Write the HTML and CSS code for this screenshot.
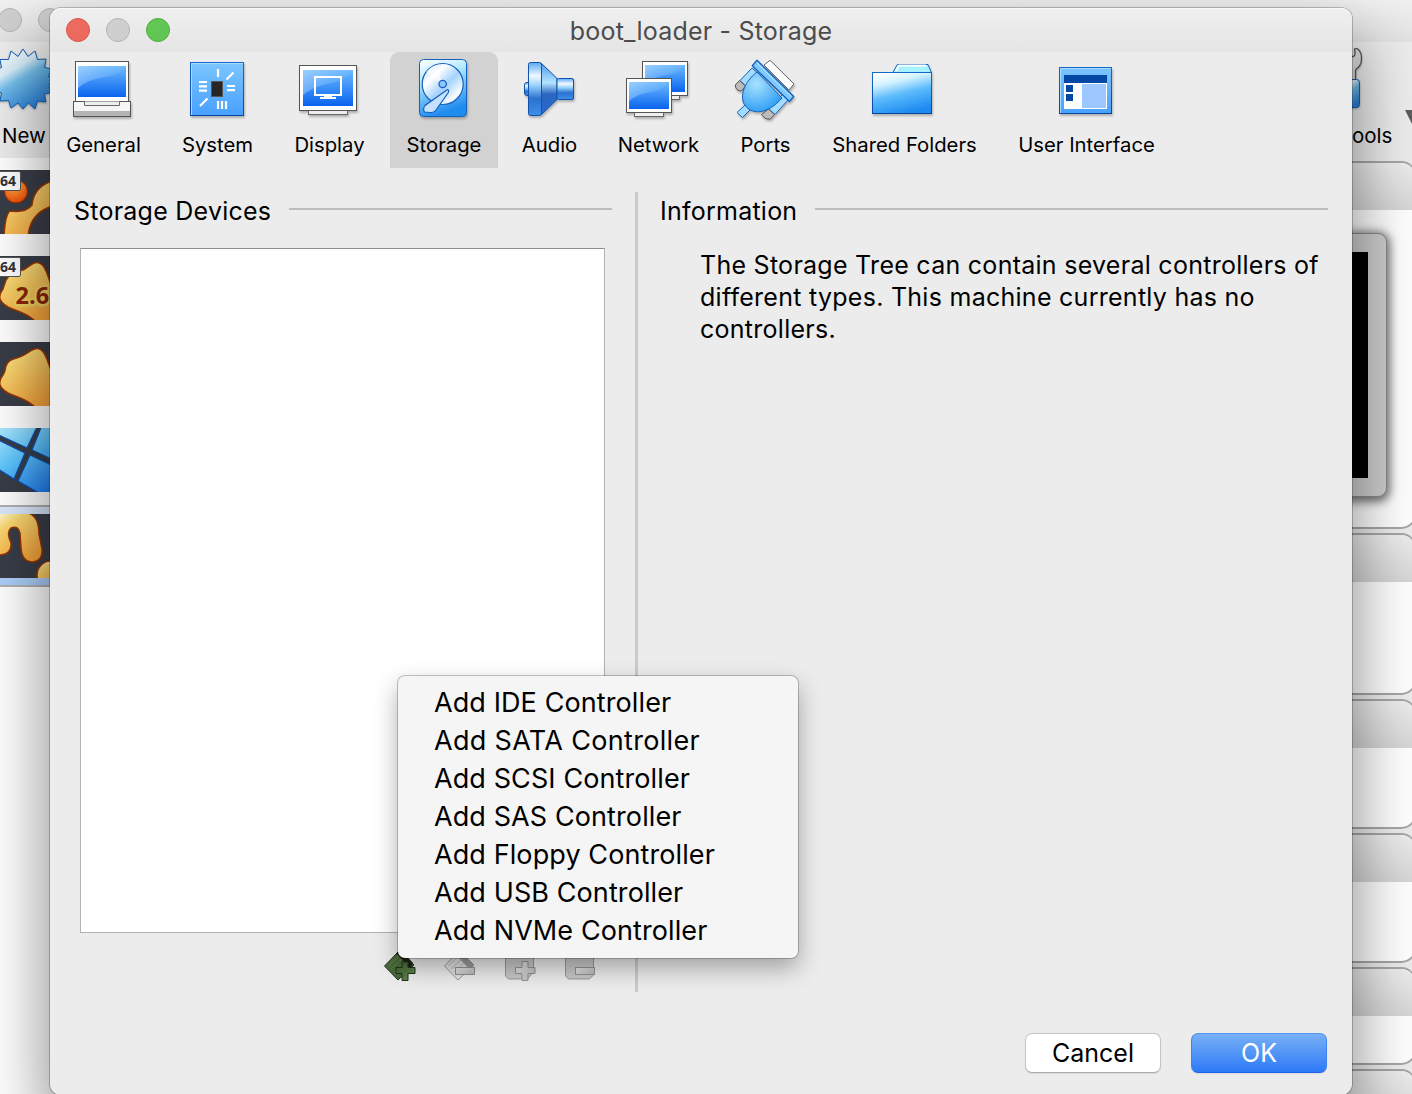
FILE: index.html
```html
<!DOCTYPE html>
<html lang="en">
<head>
<meta charset="utf-8">
<title>boot_loader - Storage</title>
<link rel="stylesheet" href="styles.css">
</head>
<body>
<svg class="defs" width="0" height="0" aria-hidden="true">
  <defs>
    <linearGradient id="screen" x1="0" y1="0" x2="0" y2="1"><stop offset="0" stop-color="#6cbaff"/><stop offset="1" stop-color="#0a63ee"/></linearGradient>
    <linearGradient id="gloss" x1="0" y1="0" x2="1" y2=".3"><stop offset="0" stop-color="#c4e2ff"/><stop offset="1" stop-color="#7cc0fe" stop-opacity=".4"/></linearGradient>
    <linearGradient id="tile" x1="0" y1="0" x2="0" y2="1"><stop offset="0" stop-color="#7cc6ff"/><stop offset="1" stop-color="#48a0ff"/></linearGradient>
    <linearGradient id="edge" x1="0" y1="0" x2="0" y2="1"><stop offset="0" stop-color="#1468cc"/><stop offset="1" stop-color="#0b46a0"/></linearGradient>
    <linearGradient id="drive" x1="0" y1="0" x2=".3" y2="1"><stop offset="0" stop-color="#fff"/><stop offset=".35" stop-color="#b9ecff"/><stop offset="1" stop-color="#1f8cf0"/></linearGradient>
    <linearGradient id="disc" x1="0" y1="0" x2="1" y2="1"><stop offset="0" stop-color="#a4d4ff"/><stop offset=".3" stop-color="#fff"/><stop offset=".55" stop-color="#a4d2fd"/><stop offset=".8" stop-color="#f8fcff"/><stop offset="1" stop-color="#a4d4ff"/></linearGradient>
    <linearGradient id="metal" x1="0" y1="0" x2="0" y2="1"><stop offset="0" stop-color="#5aa8f4"/><stop offset=".25" stop-color="#f0f9ff"/><stop offset=".42" stop-color="#a0d6fc"/><stop offset=".68" stop-color="#2a72d0"/><stop offset="1" stop-color="#3f8fe8"/></linearGradient>
    <linearGradient id="cone" x1="0" y1="0" x2="0" y2="1"><stop offset="0" stop-color="#4f9cec"/><stop offset=".38" stop-color="#b4e4ff"/><stop offset=".6" stop-color="#2c66c2"/><stop offset="1" stop-color="#2868cc"/></linearGradient>
    <radialGradient id="plug" cx=".35" cy=".3" r=".75"><stop offset="0" stop-color="#a8e2ff"/><stop offset="1" stop-color="#2b9df4"/></radialGradient>
    <linearGradient id="folder" x1=".2" y1="0" x2=".55" y2="1"><stop offset="0" stop-color="#fff"/><stop offset=".25" stop-color="#d4f2ff"/><stop offset=".55" stop-color="#5cbcfc"/><stop offset="1" stop-color="#1c8af0"/></linearGradient>
    <linearGradient id="star" x1="0" y1="0" x2=".6" y2="1"><stop offset="0" stop-color="#fff"/><stop offset=".38" stop-color="#d8eef8"/><stop offset=".55" stop-color="#74c0ec"/><stop offset="1" stop-color="#2a80d8"/></linearGradient>
    <linearGradient id="gold" x1="0" y1="0" x2=".6" y2="1"><stop offset="0" stop-color="#fffce0"/><stop offset=".3" stop-color="#fad872"/><stop offset="1" stop-color="#f4a43c"/></linearGradient>
    <radialGradient id="orange" cx=".4" cy=".25" r=".8"><stop offset="0" stop-color="#ffb048"/><stop offset="1" stop-color="#f04800"/></radialGradient>
    <linearGradient id="pane" x1="0" y1="0" x2=".6" y2="1"><stop offset="0" stop-color="#c4f4fc"/><stop offset=".5" stop-color="#5cc4ff"/><stop offset="1" stop-color="#1c78f0"/></linearGradient>
    <linearGradient id="silver" x1="0" y1="0" x2="1" y2="1"><stop offset="0" stop-color="#ededed"/><stop offset="1" stop-color="#b4b4b4"/></linearGradient>
    <linearGradient id="green" x1="0" y1="0" x2="1" y2="1"><stop offset="0" stop-color="#3c5c2e"/><stop offset="1" stop-color="#688c54"/></linearGradient>
  </defs>
</svg>

<div class="manager">
  <div class="manager-titlebar"><i class="light"></i><i class="light"></i></div>
  <div class="manager-toolbar">
    <div class="tool-new">
      <svg width="56" height="68" viewBox="0 46 56 68"><path d="M23 49L28 56.500L35 51L37.500 59.500L46 59L44.500 67.500L53 69L48 76L56 80L48 85.500L53 92L44.500 94L46 102L37.500 101L35 109L28.500 103L23 109L18 103L11 108L8.500 100.500L0 101L1.500 93L-5 90L-1 85L-5 80L-1 76L-5 70L1.500 67.500L0 59.500L8.500 59.500L11 51L18 56.500Z" fill="url(#star)" stroke="#1460b4"/></svg>
      <span>New</span>
    </div>
    <div class="tool-tools">
      <svg width="62" height="68" viewBox="1350 46 62 68"><path d="M1350 56.500h3.500q2-1 1.500-5l-.5-2.500q4-2 6.500 5q1.500 8-1.500 12l-4 4v10h-7v-20z" fill="#ddd" stroke="#555" stroke-width="1.300"/><rect x="1340" y="79.500" width="19.500" height="28" rx="3" fill="url(#star)" stroke="#1460b4"/></svg>
      <span>ools</span>
    </div>
    <i class="drop-arrow"></i>
  </div>
  <div class="manager-body">
    <div class="vm-list">
      <div class="vm"><svg viewBox="0 170 50 64"><path d="M4 237Q5 215 10 211Q26 213 32 205Q34 185 56 180V205Q28 212 28 240Z" fill="url(#gold)" stroke="#9a3400" stroke-width="1.500"/><circle cx="16" cy="191.500" r="11.500" fill="url(#orange)" stroke="#8c2800"/></svg><b>64</b></div>
      <div class="vm"><svg viewBox="0 256 50 64"><path d="M6 280C12 270 20 272 25 269C33 263 38 259 44 267C48 273 49 282 54 290V322H36C26 312 18 312 8 307C-2 301 -2 296 3 289Z" fill="url(#gold)" stroke="#9a3400" stroke-width="1.500"/><text x="15.500" y="304" class="kernel">2.6</text></svg><b>64</b></div>
      <div class="vm"><svg viewBox="0 342 50 64"><path d="M6 366C8 358 18 359 24 355C33 349 38 345 44 353C48 359 49 368 54 376V408H36C26 398 18 398 8 393C-2 387 -2 382 3 375C6 371 5 369 6 366Z" fill="url(#gold)" stroke="#9a3400" stroke-width="1.500"/></svg></div>
      <div class="vm"><svg viewBox="0 428 50 64"><path d="M-12 425H38L27 448L-12 430ZM42 425H60V463L32 450ZM-10 436L25 453L14 479L-10 464ZM30 455L60 469V505L18 481Z" fill="url(#pane)" stroke="#0b4fae" stroke-width="1.200"/></svg></div>
      <div class="vm selected"><svg viewBox="0 514 50 64"><path d="M-5 513H28Q39 516 39 534L42 549Q43 561 33 562Q22 562 21 548L20 533Q18 525 11 528Q6 532 11 543Q12 554 0 555L-5 555Z" fill="url(#gold)" stroke="#9a3400" stroke-width="1.500"/><circle cx="51" cy="575" r="14" fill="url(#gold)" stroke="#9a3400" stroke-width="1.500"/></svg></div>
    </div>
    <div class="details">
      <section class="card card-preview"><header></header><div class="preview"><div></div></div></section>
      <section class="card card-tall"><header></header></section>
      <section class="card card-short"><header></header></section>
      <section class="card card-short"><header></header></section>
      <section class="card card-small"><header></header></section>
      <section class="card card-small"><header></header></section>
    </div>
  </div>
</div>

<main class="dialog">
  <div class="titlebar">
    <div class="lights"><i class="light red"></i><i class="light"></i><i class="light green"></i></div>
    <h1>boot_loader - Storage</h1>
  </div>

  <nav class="tabs">
    <a class="tab">
      <svg width="65" height="65" viewBox="71 57 65 65"><rect x="75.500" y="61.500" width="53" height="40" fill="#fff" stroke="#555"/><path d="M78 66h48v31H78z" fill="url(#screen)"/><path d="M78 66h46q-3 9-18 11q-18 2-28 11z" fill="url(#gloss)" opacity=".55"/><rect x="73.500" y="101.500" width="57" height="15" fill="#f6f6f6" stroke="#555"/><path d="M74 111h56v5H74z" fill="#b4b4b4"/><path d="M84.500 101.500v4h35v-4" fill="#eee" stroke="#666"/></svg>
      <span>General</span></a>
    <a class="tab">
      <svg width="65" height="65" viewBox="185 57 65 65"><rect x="190.500" y="62.500" width="53" height="53" fill="url(#tile)" stroke="url(#edge)"/><path d="M191.500 115V63.500H243" fill="none" stroke="#a8dcff"/><rect x="211.500" y="81.500" width="11" height="15" fill="#262626" stroke="#555"/><path d="M218 69v8M226.500 79.500l7-7M199 82h8M199 86.300h8M199 90.600h8M227 86h8M227 90.200h8M218 101v8M222 101v8M226 101v8M200 106l7.500-7.500" stroke="#fff" stroke-width="2.200"/></svg>
      <span>System</span></a>
    <a class="tab">
      <svg width="65" height="65" viewBox="297 57 65 65"><rect x="308.500" y="108.500" width="39" height="6" fill="#eee" stroke="#666"/><rect x="299.500" y="65.500" width="57" height="45" fill="#fff" stroke="#555"/><path d="M303 70h50v36h-50z" fill="url(#screen)"/><path d="M303 70h48q-4 10-20 13q-17 3-28 12z" fill="url(#gloss)" opacity=".55"/><rect x="315" y="77" width="26" height="18" fill="none" stroke="#fff" stroke-width="2"/><path d="M324 96h8v1h4v2h-16v-2h4z" fill="#fff"/></svg>
      <span>Display</span></a>
    <a class="tab active">
      <svg width="66" height="65" viewBox="411 57 66 65"><rect x="419.500" y="59.500" width="47" height="57" rx="4" fill="url(#drive)" stroke="#1560ba"/><circle cx="442.700" cy="84" r="20.500" fill="url(#disc)" stroke="#1560ba" stroke-width="1.200"/><path d="M442.700 84L426 72A20 20 0 0 1 436 65Z" fill="#fff" opacity=".6"/><circle cx="442.700" cy="84" r="3.700" fill="#8cc8fb" stroke="#1560ba" stroke-width="1.300"/><path d="M447.500 89.500Q449.500 90 448 93L436 110Q434 113 430 112.500L424.500 112Q422.500 109 425 105.500Z" fill="#c4e2ff" stroke="#1560ba" stroke-width="1.200"/></svg>
      <span>Storage</span></a>
    <a class="tab">
      <svg width="65" height="65" viewBox="517 57 65 65"><rect x="524.500" y="82.500" width="6" height="13" rx="2.500" fill="url(#metal)" stroke="#1252a8"/><path d="M541.500 63.500L557 78.500V99.500L541.500 114.500Z" fill="url(#cone)" stroke="#1252a8"/><rect x="528.500" y="62.500" width="13" height="53" rx="2" fill="url(#metal)" stroke="#1252a8"/><rect x="557" y="78.500" width="16.500" height="21" rx="1.500" fill="url(#metal)" stroke="#1252a8"/></svg>
      <span>Audio</span></a>
    <a class="tab">
      <svg width="65" height="65" viewBox="626 57 65 65"><path d="M660 95.500h19.500v4H660z" fill="#eee" stroke="#666"/><rect x="642.500" y="61.500" width="45" height="34" fill="#fff" stroke="#555"/><path d="M645 65h40v27h-40z" fill="url(#screen)"/><path d="M645 65h38q-3 8-16 10q-14 2-22 9z" fill="url(#gloss)" opacity=".55"/><rect x="634.500" y="110.500" width="29" height="6" fill="#eee" stroke="#666"/><rect x="626.500" y="78.500" width="45" height="34" fill="#fff" stroke="#555"/><path d="M629 82h40v27h-40z" fill="url(#screen)"/><path d="M629 82h38q-3 8-16 10q-14 2-22 9z" fill="url(#gloss)" opacity=".55"/></svg>
      <span>Network</span></a>
    <a class="tab">
      <svg width="65" height="65" viewBox="733 57 65 65"><g stroke-linejoin="round"><path d="M764 65L770 60.300L794 84L789 90Z" fill="#fff" stroke="#666"/><g fill="#a4dcff" stroke="#1560ba"><path d="M752 68L758 73.500L746.500 87L740 80.500Z"/><path d="M783 94L788.500 99.500L775 114.500L768.500 108.500Z"/><path d="M745 105L750 110L742.500 117.500L737 112.500Z"/></g><path d="M739.500 80.500L745.500 86L741.500 91Q735.500 91 735.300 85ZM768.500 109L774.500 114.500L770.500 119Q765 120 761.500 114.500Z" fill="#bbb" stroke="#555"/><path d="M757 72C744 82 739 97 745 105.500C753 115.500 768 114 782 98Z" fill="url(#plug)" stroke="#1560ba"/><path d="M757 60.300L793.700 96.500L789.500 101.500L752.300 65.700Z" fill="#7ccaff" stroke="#1560ba" stroke-width="1.300"/><path d="M756.500 62.500L791 96.500" stroke="#bce8ff"/></g></svg>
      <span>Ports</span></a>
    <a class="tab">
      <svg width="65" height="65" viewBox="872 57 65 65"><path d="M892.500 73L897.300 64.500H928L931.500 73Z" fill="#a8f2ff" stroke="#1560ba"/><path d="M896 71l3-5.500h27" stroke="#fff" stroke-width="2" fill="none"/><rect x="872.500" y="72.500" width="59" height="41" fill="url(#folder)" stroke="url(#edge)"/></svg>
      <span>Shared Folders</span></a>
    <a class="tab">
      <svg width="65" height="65" viewBox="1054 57 65 65"><rect x="1059.500" y="67.500" width="52" height="46" fill="url(#tile)" stroke="url(#edge)"/><path d="M1060.500 113V68.500H1111" fill="none" stroke="#a8dcff"/><path d="M1064 75h43v34h-43z" fill="#fff"/><path d="M1064 75h43v8h-43zM1066 85h7v7h-7zM1066 94h7v7h-7z" fill="#0448a6"/><path d="M1082 84h24v24h-24z" fill="#9cc8ff"/></svg>
      <span>User Interface</span></a>
  </nav>

  <div class="content">
    <section class="devices">
      <h2>Storage Devices</h2>
      <div class="device-tree"></div>
      <div class="device-actions">
        <svg width="34" height="34" viewBox="384 950 34 34"><path d="M384.500 966L399 951L414 965L398 980Z" fill="#48683a" stroke="#24331c"/><path d="M396 953L403 952L413 963L410 969Z" fill="#1c2018"/><path d="M388 966l11-10M391 969l11-10M394 972l10-9" stroke="#5c8048"/><path d="M402 962h6v5.500h7v6h-7v7h-6v-7h-6v-6h6z" fill="url(#green)" stroke="#1f321a"/></svg>
        <svg width="34" height="34" viewBox="444 950 34 34"><path d="M444.500 966L459 951L474 965L458 980Z" fill="#e2e2e2" stroke="#999"/><path d="M462 952L474 965L470 970L456 955Z" fill="#999"/><path d="M448 966l11-10M451 969l11-10M454 972l10-9" stroke="#bbb"/><rect x="455.500" y="967.500" width="19" height="7" fill="url(#silver)" stroke="#929292"/></svg>
        <svg width="34" height="34" viewBox="504 950 34 34"><path d="M505.500 950h28v22l-6 7h-19l-3-3z" fill="#c8c8c8" stroke="#999"/><path d="M522 961.500h6v6h7v6h-7v7h-6v-7h-6.500v-6h6.500z" fill="url(#silver)" stroke="#929292"/></svg>
        <svg width="34" height="34" viewBox="564 950 34 34"><path d="M565.500 950h28v25l-4 4h-21l-3-3z" fill="#c8c8c8" stroke="#999"/><rect x="575.500" y="967.500" width="19" height="7" fill="url(#silver)" stroke="#929292"/></svg>
      </div>
    </section>
    <div class="splitter"></div>
    <section class="info">
      <h2>Information</h2>
      <p>The Storage Tree can contain several controllers of<br>different types. This machine currently has no<br>controllers.</p>
    </section>
  </div>

  <footer><button class="cancel">Cancel</button><button class="ok">OK</button></footer>

  <ul class="menu">
    <li>Add IDE Controller</li>
    <li class="sata">Add SATA Controller</li>
    <li>Add SCSI Controller</li>
    <li>Add SAS Controller</li>
    <li>Add Floppy Controller</li>
    <li>Add USB Controller</li>
    <li>Add NVMe Controller</li>
  </ul>
</main>
</body>
</html>
```
FILE: styles.css
```css
* { box-sizing: border-box; }
body {
  margin: 0;
  width: 1412px;
  height: 1094px;
  position: relative;
  overflow: hidden;
  background: #ececec;
  color: #000;
  font-family: Inter, "Liberation Sans", sans-serif;
  font-weight: 430;
}
.defs { position: absolute; }
h1, h2, p, ul { margin: 0; padding: 0; font-weight: 430; }

.light {
  display: block;
  width: 24px;
  height: 24px;
  border-radius: 50%;
  background: #cfcfcf;
  border: 1px solid #b4b4b4;
}
.light.red { background: #ed6a5e; border-color: #d9564b; }
.light.green { background: #61c654; border-color: #4fae40; }

/* Window behind the dialog */
.manager { height: 1094px; display: flex; flex-direction: column; overflow: hidden; }
.manager-titlebar {
  height: 42px;
  flex: none;
  display: flex;
  gap: 16px;
  padding: 8px 0 0 0;
  margin-left: -2px;
  background: linear-gradient(#f0f0f0, #e2e2e2);
}
.manager-toolbar {
  height: 116px;
  flex: none;
  display: flex;
  justify-content: space-between;
  position: relative;
  background: #ececec;
  font-size: 20.5px;
}
.tool-new, .tool-tools { padding-top: 4px; }
.tool-new svg, .tool-tools svg { display: block; filter: drop-shadow(0 1px 1px rgba(0,0,0,.3)); }
.tool-new span, .tool-tools span { display: block; margin-top: 9px; padding-left: 2px; }
.drop-arrow {
  position: absolute;
  right: -11px;
  top: 68px;
  border: 9px solid transparent;
  border-top: 18px solid #5c5c5c;
}
.manager-body { flex: 1; display: flex; justify-content: space-between; }
.vm-list { width: 60px; background: #fff; padding-top: 3px; }
.vm { height: 86px; padding-top: 9px; position: relative; }
.vm svg { display: block; width: 50px; height: 64px; background: #393d47; }
.vm b {
  position: absolute;
  left: -3px;
  top: 10px;
  width: 24px;
  height: 20px;
  background: #fff;
  border: 1px solid #555;
  border-radius: 2px;
  font: 700 14px/18px "Open Sans", sans-serif;
  padding-left: 2px;
  color: #333;
}
.vm.selected {
  height: 82px;
  padding-top: 7px;
  border-top: 2px solid #b0b0b0;
  border-bottom: 2px solid #b0b0b0;
  background: linear-gradient(#dce9fc, #a9cdfb);
}
.kernel { font: 700 23.5px "Open Sans", sans-serif; fill: #8c2408; stroke: #eed060; stroke-width: 5px; paint-order: stroke; stroke-linejoin: round; }
.details { width: 76px; padding-top: 3px; margin-right: -5px; display: flex; flex-direction: column; gap: 4px; }
.card { flex: none; border: 2px solid #a6a6a6; border-left: 0; border-radius: 0 16px 16px 0; background: #fff; overflow: hidden; }
.card header { height: 47px; background: linear-gradient(#ededed, #d6d6d6); }
.card-preview { height: 368px; }
.card-tall { height: 162px; }
.card-short { height: 130px; }
.card-small { height: 98px; }
.preview {
  width: 46px;
  height: 264px;
  margin-top: 23px;
  padding: 18px 18px 18px 0;
  border: 1px solid #888;
  border-radius: 0 9px 9px 0;
  background: #cecece;
  box-shadow: 0 2px 10px 3px rgba(0,0,0,.55);
}
.preview div { height: 226px; background: #000; }

/* Settings dialog */
.dialog {
  position: absolute;
  left: 50px;
  top: 8px;
  width: 1302px;
  height: 1087px;
  border-radius: 11px;
  background: #ececec;
  display: flex;
  flex-direction: column;
  box-shadow: 0 0 0 1px rgba(0,0,0,.22), 0 32px 64px 4px rgba(0,0,0,.45);
}
.titlebar {
  height: 44px;
  flex: none;
  display: flex;
  align-items: center;
  justify-content: center;
  position: relative;
  border-radius: 11px 11px 0 0;
  background: linear-gradient(#efefef, #e5e5e5);
  border-top: 1px solid #f8f8f8;
}
.lights { position: absolute; left: 16px; top: 9px; display: flex; gap: 16px; }
.titlebar h1 { font-size: 25px; line-height: 30px; letter-spacing: .2px; color: #4c4c4c; white-space: nowrap; padding-top: 1px; }
.tabs {
  flex: none;
  height: 116px;
  padding-left: 1px;
  display: grid;
  grid-template-columns: 105px 103px 101px 108px 83px 115px 79px 179px 165px;
  column-gap: 10px;
}
.tab { display: flex; flex-direction: column; align-items: center; padding-top: 5px; font-size: 20.3px; line-height: 26px; white-space: nowrap; }
.tab svg { flex: none; filter: drop-shadow(1px 2px 1px rgba(0,0,0,.25)); }
.tab span { margin-top: 10px; }
.tab.active { background: #d2d2d2; border-radius: 9px 9px 0 0; }

.content { flex: none; height: 824px; padding: 24px 24px 0; display: flex; }
.devices { width: 561px; }
h2 { display: flex; align-items: center; gap: 18px; height: 38px; font-size: 25px; line-height: 38px; letter-spacing: .24px; white-space: nowrap; }
h2::after { content: ""; flex: 1; height: 2px; margin-top: -5px; background: #bdbdbd; }
.devices h2 { padding-right: 23px; }
.device-tree { margin: 18px 0 0 6px; width: 525px; height: 685px; background: #fff; border: 1px solid #b2b2b2; border-top-color: #8e8e8e; }
.device-actions { display: flex; gap: 26px; margin: 17px 0 0 310px; }
.splitter { width: 3px; height: 800px; background: #cacaca; }
.info { flex: 1; padding-left: 22px; }
.info p { margin: 19px 0 0 40px; font-size: 25px; line-height: 32px; letter-spacing: .27px; white-space: nowrap; }

footer { display: flex; justify-content: flex-end; gap: 30px; padding: 41px 25px 0 0; }
footer button {
  width: 136px;
  height: 40px;
  padding: 0;
  border: 1px solid #c4c4c4;
  border-bottom-color: #aaa;
  border-radius: 7px;
  background: #fff;
  color: #000;
  font: 430 25px/36px Inter, sans-serif;
  box-shadow: 0 1px 1px rgba(0,0,0,.08);
}
footer .ok { color: #fff; border-color: #5096ee #3c82f0 #2062ec; background: linear-gradient(#78b0f4, #2d7af8); }

.menu {
  position: absolute;
  left: 348px;
  top: 668px;
  width: 400px;
  height: 282px;
  padding: 8px 0 0 36px;
  list-style: none;
  border-radius: 7px;
  background: #f5f5f5;
  box-shadow: 0 0 0 1px rgba(0,0,0,.22), 0 10px 24px rgba(0,0,0,.32);
}
.menu li { height: 38px; font-size: 27px; line-height: 38px; letter-spacing: .1px; white-space: nowrap; }
.menu .sata { letter-spacing: .32px; }
```
